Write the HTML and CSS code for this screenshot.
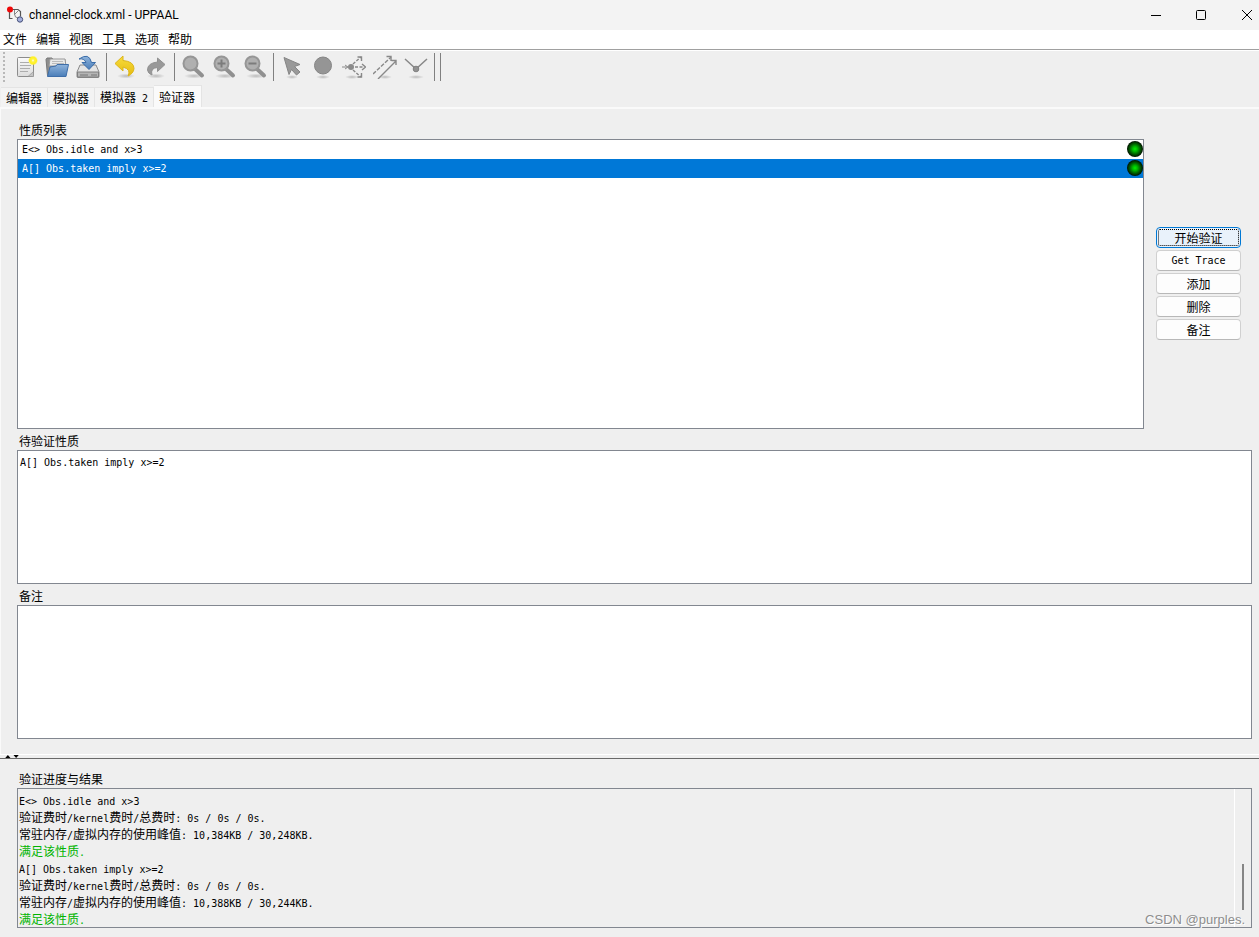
FILE: index.html
```html
<!DOCTYPE html>
<html lang="zh-CN">
<head>
<meta charset="utf-8">
<title>channel-clock.xml - UPPAAL</title>
<link rel="stylesheet" href="styles.css">
</head>
<body>
<svg class="defs" aria-hidden="true">
  <defs>
    <linearGradient id="paper" x1="0" y1="0" x2="0" y2="1"><stop offset="0" stop-color="#fafafa"/><stop offset="1" stop-color="#dcdcdc"/></linearGradient>
    <linearGradient id="blue" x1="0" y1="0" x2="0" y2="1"><stop offset="0" stop-color="#8fb4dc"/><stop offset="1" stop-color="#4a7db8"/></linearGradient>
    <linearGradient id="gold" x1="0" y1="0" x2="0" y2="1"><stop offset="0" stop-color="#f7dc3c"/><stop offset="1" stop-color="#e6bb10"/></linearGradient>
    <radialGradient id="glow"><stop offset="0" stop-color="#fffef0"/><stop offset=".3" stop-color="#fff340"/><stop offset=".7" stop-color="#fff020"/><stop offset="1" stop-color="#fff340" stop-opacity="0"/></radialGradient>
    <radialGradient id="shade"><stop offset="0" stop-color="#000" stop-opacity=".22"/><stop offset="1" stop-color="#000" stop-opacity="0"/></radialGradient>
  </defs>
</svg>
<div class="window">
  <header class="titlebar">
    <svg class="app-icon" viewBox="0 0 18 18" width="18" height="18" aria-hidden="true">
      <path d="M3.500 5v7.500h3M7 3.500h5l2.500 2v5" fill="none" stroke="#555" stroke-width="1.200"/>
      <path d="M8.500 4v4q0 4 4 4M8 9l4-4" fill="none" stroke="#888"/>
      <circle cx="4" cy="3.500" r="3" fill="#ee0808"/>
      <circle cx="14" cy="13.500" r="2.700" fill="#a5b0dc" stroke="#465078"/>
    </svg>
    <h1 class="title">channel-clock.xml - UPPAAL</h1>
    <div class="controls">
      <button class="control" aria-label="最小化"><svg viewBox="0 0 12 12" width="12" height="12"><path d="M1 6.500h10" stroke="#000"/></svg></button>
      <button class="control" aria-label="最大化"><svg viewBox="0 0 12 12" width="12" height="12"><rect x="1.500" y="1.500" width="9" height="9" rx="1" fill="none" stroke="#000"/></svg></button>
      <button class="control" aria-label="关闭"><svg viewBox="0 0 12 12" width="12" height="12"><path d="M1 1l10 10M11 1L1 11" stroke="#000"/></svg></button>
    </div>
  </header>
  <nav class="menubar">
    <button>文件</button><button>编辑</button><button>视图</button><button>工具</button><button>选项</button><button>帮助</button>
  </nav>
  <div class="toolbar" role="toolbar">
    <span class="grip"></span>
    <button aria-label="新建"><svg viewBox="0 0 24 24">
      <rect x="3.500" y="2.500" width="16" height="19" rx="1" fill="url(#paper)" stroke="#8c8c8c"/>
      <path d="M6 7.500h9M6 10.500h11M6 13.500h10M6 16.500h8" stroke="#adadad"/>
      <path d="M14 21.500l5.500-5v5z" fill="#c4c4c4" stroke="#8c8c8c" stroke-width=".6"/>
      <circle cx="19" cy="5.500" r="5" fill="url(#glow)"/></svg></button>
    <button aria-label="打开"><svg viewBox="0 0 24 24">
      <path d="M2.500 20.500L1 4.500 2 3h5l1 1.500h12V18z" fill="#8d8d8d" stroke="#777"/>
      <path d="M5 4h15l1 7H4z" fill="#e9e9e9" stroke="#999"/><path d="M7 6.500h11M7 8.500h12" stroke="#bbb"/>
      <path d="M5 12l6-1 1-1.500h11.500L21 21.500H2.500z" fill="url(#blue)" stroke="#3e6ea9"/></svg></button>
    <button aria-label="保存"><svg viewBox="0 0 24 24">
      <path d="M4 10h16l3 7v4.500q0 1-1 1H2q-1 0-1-1V17z" fill="#e4e4e4" stroke="#888"/>
      <path d="M1.500 17h21v5h-21z" fill="#b5b5b5" stroke="#808080"/><path d="M4 20h8M16 19v2M18 19v2M20 19v2" stroke="#777"/>
      <path d="M3 4Q13-3 15.500 7.500h4L13 14.500 6 7.500h4Q8 3 3 4z" fill="url(#blue)" stroke="#3a6ca8"/></svg></button>
    <span class="sep"></span>
    <button aria-label="撤销"><svg viewBox="0 0 24 24">
      <ellipse cx="13" cy="21" rx="9" ry="2.500" fill="url(#shade)"/>
      <path d="M2 8.500L10 1v4.500q11 1 11 8-.5 5-6 7.500 3.500-6.500-5-9v4z" fill="url(#gold)" stroke="#dcb51a"/></svg></button>
    <button aria-label="重做"><svg viewBox="0 0 24 24">
      <ellipse cx="12" cy="21" rx="9" ry="2.500" fill="url(#shade)"/>
      <path d="M21 9.500L13.500 3v4Q3.500 8 3.500 15q.5 3.500 4.500 5-2-7 5.500-7.500v4z" fill="#999" stroke="#919191"/></svg></button>
    <span class="sep"></span>
    <button aria-label="适合窗口"><svg viewBox="0 0 24 24">
      <ellipse cx="13" cy="21" rx="10" ry="2.500" fill="url(#shade)"/>
      <path d="M14 14l7 6.500" stroke="#909090" stroke-width="4" stroke-linecap="round"/><circle cx="9.500" cy="8.500" r="7" fill="#b0b0b0" stroke="#969696" stroke-width="2"/></svg></button>
    <button aria-label="放大"><svg viewBox="0 0 24 24">
      <ellipse cx="13" cy="21" rx="10" ry="2.500" fill="url(#shade)"/>
      <path d="M14 14l7 6.500" stroke="#909090" stroke-width="4" stroke-linecap="round"/><circle cx="9.500" cy="8.500" r="7" fill="#b0b0b0" stroke="#969696" stroke-width="2"/><path d="M5.500 8.500h8M9.500 4.500v8" stroke="#7c7c7c" stroke-width="2"/></svg></button>
    <button aria-label="缩小"><svg viewBox="0 0 24 24">
      <ellipse cx="13" cy="21" rx="10" ry="2.500" fill="url(#shade)"/>
      <path d="M14 14l7 6.500" stroke="#909090" stroke-width="4" stroke-linecap="round"/><circle cx="9.500" cy="8.500" r="7" fill="#b0b0b0" stroke="#969696" stroke-width="2"/><path d="M5.500 8.500h8" stroke="#7c7c7c" stroke-width="2"/></svg></button>
    <span class="sep"></span>
    <button aria-label="选择"><svg viewBox="0 0 24 24">
      <ellipse cx="12" cy="22" rx="6" ry="2" fill="url(#shade)"/>
      <path d="M4 2.500l16 7-5.500 2 5.500 5.500-3.500 3-5-5.500-2.500 5z" fill="#999" stroke="#858585"/></svg></button>
    <button aria-label="位置"><svg viewBox="0 0 24 24">
      <ellipse cx="12" cy="22" rx="7" ry="2" fill="url(#shade)"/><circle cx="12" cy="10.500" r="8.500" fill="#959595" stroke="#858585"/></svg></button>
    <button aria-label="分支点"><svg viewBox="0 0 24 24">
      <ellipse cx="10" cy="22" rx="7" ry="2" fill="url(#shade)"/><circle cx="9" cy="12" r="3" fill="#8a8a8a"/>
      <path d="M0 12h5M3 10l3 2-3 2" fill="none" stroke="#8a8a8a"/>
      <path d="M11 9l8-7M13 12h9M11 15l8 7" fill="none" stroke="#888" stroke-width="1.400" stroke-dasharray="3 1.500"/>
      <path d="M15.500 2h4v4M20 9l3.500 3-3.500 3M19.500 18v4h-4" fill="none" stroke="#888" stroke-width="1.400"/></svg></button>
    <button aria-label="边"><svg viewBox="0 0 24 24">
      <ellipse cx="12" cy="22" rx="7" ry="2" fill="url(#shade)"/>
      <path d="M0 19L18 2" stroke="#888" stroke-width="1.400" stroke-dasharray="4 1.500"/><path d="M13.500 1.500H18V6M5 24L23 6M18.500 5.500H23V10" fill="none" stroke="#888" stroke-width="1.400"/></svg></button>
    <button aria-label="钉"><svg viewBox="0 0 24 24">
      <ellipse cx="12" cy="22" rx="8" ry="2" fill="url(#shade)"/>
      <path d="M1 4l11 10L23 4" fill="none" stroke="#888" stroke-width="1.500"/><circle cx="12" cy="14" r="2.800" fill="#929292" stroke="#808080"/></svg></button>
    <span class="sep"></span><span class="sep"></span>
  </div>
  <div class="tabs" role="tablist">
    <button class="tab" role="tab">编辑器</button><button class="tab" role="tab">模拟器</button><button class="tab" role="tab">模拟器<span class="en"> 2</span></button><button class="tab selected" role="tab" aria-selected="true">验证器</button>
  </div>
  <main class="verifier">
    <section class="overview">
      <div class="panel">
        <h2 id="list-label">性质列表</h2>
        <ul class="queries en" role="listbox" aria-labelledby="list-label">
          <li role="option">E&lt;&gt; Obs.idle and x&gt;3<span class="lamp"></span></li>
          <li role="option" aria-selected="true" class="active">A[] Obs.taken imply x&gt;=2<span class="lamp"></span></li>
        </ul>
      </div>
      <div class="actions">
        <button class="primary">开始验证</button>
        <button class="en">Get Trace</button>
        <button>添加</button>
        <button>删除</button>
        <button>备注</button>
      </div>
    </section>
    <section class="panel field">
      <label for="query">待验证性质</label>
      <textarea id="query" class="en" spellcheck="false">A[] Obs.taken imply x&gt;=2</textarea>
    </section>
    <section class="panel field">
      <label for="comment">备注</label>
      <textarea id="comment"></textarea>
    </section>
  </main>
  <div class="splitter"><svg viewBox="0 0 24 4" width="24" height="4" aria-hidden="true"><path d="M3 4l3.500-4L10 4zM14 0h7l-3.500 4z" fill="#000"/></svg></div>
  <section class="results panel">
    <h2>验证进度与结果</h2>
    <div class="log">
      <div class="lines">
        <p><span class="en">E&lt;&gt; Obs.idle and x&gt;3</span></p>
        <p>验证费时<span class="en">/kernel</span>费时<span class="en">/</span>总费时<span class="en">: 0s / 0s / 0s.</span></p>
        <p>常驻内存<span class="en">/</span>虚拟内存的使用峰值<span class="en">: 10,384KB / 30,248KB.</span></p>
        <p class="ok">满足该性质<span class="en">.</span></p>
        <p><span class="en">A[] Obs.taken imply x&gt;=2</span></p>
        <p>验证费时<span class="en">/kernel</span>费时<span class="en">/</span>总费时<span class="en">: 0s / 0s / 0s.</span></p>
        <p>常驻内存<span class="en">/</span>虚拟内存的使用峰值<span class="en">: 10,388KB / 30,244KB.</span></p>
        <p class="ok">满足该性质<span class="en">.</span></p>
      </div>
      <div class="scroll"><span class="thumb"></span></div>
    </div>
    <span class="watermark">CSDN @purples.</span>
  </section>
</div>
</body>
</html>
```
FILE: styles.css
```css
* { box-sizing: border-box; }
body {
  margin: 0;
  font: 12px/16px "Noto Sans CJK SC", sans-serif;
  color: #000;
  background: #efefef;
}
button { margin: 0; padding: 0; border: 0; background: none; font: inherit; color: inherit; }
h1, h2, p, ul { margin: 0; padding: 0; font-weight: normal; }
svg { display: block; }
.defs { position: absolute; width: 0; height: 0; }
.en, button.en { font-family: "DejaVu Sans Mono", monospace; font-size: 10px; }
.window { display: flex; flex-direction: column; height: 100vh; min-height: 600px; overflow: hidden; }

.titlebar { display: flex; align-items: center; flex: none; height: 30px; padding-left: 6px; background: #f3f3f3; }
.title { flex: 1; margin-left: 5px; font: 12px/16px Roboto, sans-serif; }
.controls { display: flex; }
.control { display: grid; place-items: center; width: 45px; height: 28px; }
.control:last-child { width: 47px; margin-right: -11px; }

.menubar { display: flex; gap: 9px; height: 20px; padding-left: 3px; background: #fff; border-bottom: 1px solid #a0a0a0; flex: none; }
.menubar button { height: 18px; line-height: 18px; }

.toolbar { display: flex; align-items: center; height: 33px; padding-left: 3px; border-top: 1px solid #fff; flex: none; }
.toolbar button { display: grid; place-items: center; width: 31px; height: 30px; }
.toolbar svg { width: 24px; height: 24px; }
.grip { width: 2px; height: 30px; margin-right: 5px; background: repeating-linear-gradient(#b8b8b8 0 2px, #efefef 2px 4px); }
.sep { width: 1px; height: 28px; margin: 0 2px 0 3px; background: #808080; }

.tabs { display: flex; align-items: flex-end; height: 24px; margin-top: 2px; padding-left: 1px; border-bottom: 2px solid #fafafa; flex: none; }
.tab { height: 20px; padding: 0 5px; border: 1px solid #e4e4e4; border-width: 1px 1px 0 0; background: #f3f3f3; white-space: pre; line-height: 18px; }
.tab.selected { height: 22px; background: #fafafa; padding: 0 6px 0 5px; }

.verifier { flex: 1; display: flex; flex-direction: column; min-height: 0; padding: 12px 7px 15px 16px; border-left: 1px solid #fafafa; }
.panel { display: flex; flex-direction: column; min-width: 0; min-height: 0; }
.panel h2, .panel label { flex: none; height: 18px; padding-left: 2px; font-size: 12px; line-height: 18px; }
.overview { flex: 307 1 0; display: flex; min-height: 0; }
.overview .panel { flex: 1; }
.queries { flex: 1; list-style: none; border: 1px solid #828790; background: #fff; line-height: 19px; }
.queries li { display: flex; align-items: center; justify-content: space-between; height: 19px; padding-left: 4px; }
.queries .active { background: #0078d7; color: #fff; }
.lamp { width: 16px; height: 16px; margin-bottom: 1px; border-radius: 50%; background: radial-gradient(circle closest-side, #00f000 0, #00b800 30%, #006000 65%, #001000 100%); }
.actions { display: flex; flex-direction: column; justify-content: center; gap: 2px; width: 85px; margin: 0 11px 0 12px; padding-top: 18px; }
.actions button { height: 21px; line-height: 19px; border: 1px solid #d0d0d0; border-bottom-color: #b8b8b8; border-radius: 4px; background: #fdfdfd; }
.actions .primary { border-color: #0078d4; background: #e9f2fb; outline: 1px dotted #000; outline-offset: -3px; }
.field { flex: 152 1 0; margin-top: 3px; }
.field textarea { flex: 1; min-height: 0; width: 100%; padding: 4px 2px; border: 1px solid #828790; border-radius: 0; background: #fff; color: #000; line-height: 16px; resize: none; outline: 0; }

.splitter { height: 5px; flex: none; border-top: 1px solid #fff; border-bottom: 1px solid #696969; }
.splitter svg { height: 3px; }
.results { position: relative; flex: none; padding: 11px 7px 9px 17px; }
.log { display: flex; border: 1px solid #828790; }
.lines { flex: 1; padding: 2px 1px 0; line-height: 17px; }
.lines p { height: 17px; white-space: nowrap; }
.ok { color: #00b400; }
.scroll { display: flex; justify-content: center; align-items: flex-end; width: 17px; padding-bottom: 17px; border-left: 1px solid #fff; }
.thumb { width: 2px; height: 46px; background: #858585; }
.watermark { position: absolute; right: 14px; bottom: 8px; font: 13px/18px "Liberation Sans", sans-serif; color: #8d8d8d; text-shadow: 1px 1px 0 #fff; }
```
